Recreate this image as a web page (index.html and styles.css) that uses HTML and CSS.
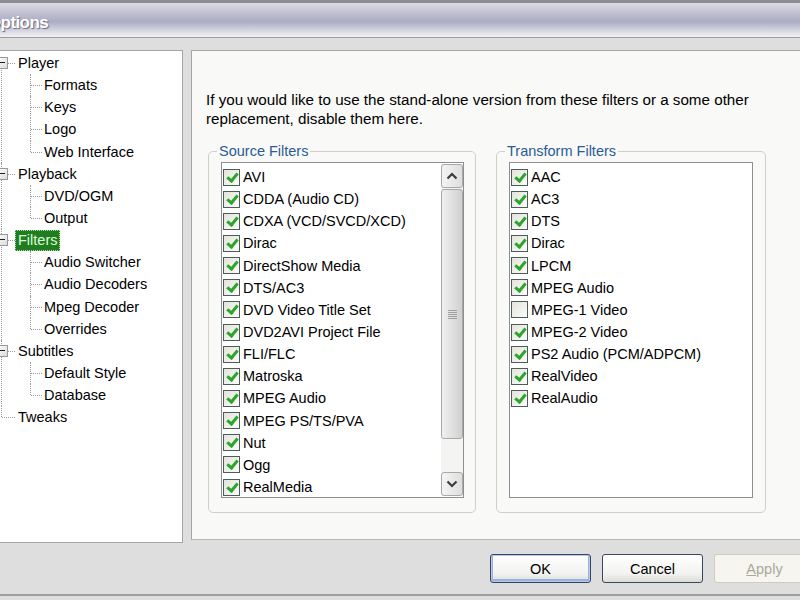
FILE: index.html
```html
<!DOCTYPE html>
<html>
<head>
<meta charset="utf-8">
<link rel="stylesheet" href="styles.css">
</head>
<body>
<div class="window">
  <div class="titlebar"><span class="title">Options</span></div>
  <div class="main">
    <div class="tree">
      <div class="grp first">
        <div class="row top"><span class="exp"></span><span class="lbl">Player</span></div>
        <div class="kids">
          <div class="row kid">Formats</div>
          <div class="row kid">Keys</div>
          <div class="row kid">Logo</div>
          <div class="row kid last">Web Interface</div>
        </div>
      </div>
      <div class="grp">
        <div class="row top"><span class="exp"></span><span class="lbl">Playback</span></div>
        <div class="kids">
          <div class="row kid">DVD/OGM</div>
          <div class="row kid last">Output</div>
        </div>
      </div>
      <div class="grp">
        <div class="row top"><span class="exp"></span><span class="lbl sel">Filters</span></div>
        <div class="kids">
          <div class="row kid">Audio Switcher</div>
          <div class="row kid">Audio Decoders</div>
          <div class="row kid">Mpeg Decoder</div>
          <div class="row kid last">Overrides</div>
        </div>
      </div>
      <div class="grp">
        <div class="row top"><span class="exp"></span><span class="lbl">Subtitles</span></div>
        <div class="kids">
          <div class="row kid">Default Style</div>
          <div class="row kid last">Database</div>
        </div>
      </div>
      <div class="grp lastgrp">
        <div class="row top leaf"><span class="lbl">Tweaks</span></div>
      </div>
    </div>

    <div class="panel">
      <p class="desc">If you would like to use the stand-alone version from these filters or a some other<br>replacement, disable them here.</p>
      <div class="groups">
        <fieldset class="group src">
          <legend>Source Filters</legend>
          <div class="listbox">
            <div class="items">
              <div class="item"><span class="cb on"></span>AVI</div>
              <div class="item"><span class="cb on"></span>CDDA (Audio CD)</div>
              <div class="item"><span class="cb on"></span>CDXA (VCD/SVCD/XCD)</div>
              <div class="item"><span class="cb on"></span>Dirac</div>
              <div class="item"><span class="cb on"></span>DirectShow Media</div>
              <div class="item"><span class="cb on"></span>DTS/AC3</div>
              <div class="item"><span class="cb on"></span>DVD Video Title Set</div>
              <div class="item"><span class="cb on"></span>DVD2AVI Project File</div>
              <div class="item"><span class="cb on"></span>FLI/FLC</div>
              <div class="item"><span class="cb on"></span>Matroska</div>
              <div class="item"><span class="cb on"></span>MPEG Audio</div>
              <div class="item"><span class="cb on"></span>MPEG PS/TS/PVA</div>
              <div class="item"><span class="cb on"></span>Nut</div>
              <div class="item"><span class="cb on"></span>Ogg</div>
              <div class="item"><span class="cb on"></span>RealMedia</div>
            </div>
            <div class="scrollbar">
              <div class="sbtn"><svg width="12" height="8" viewBox="0 0 12 8"><path d="M1.5 6.5 L6 2 L10.5 6.5" fill="none" stroke="#3b3b3b" stroke-width="2.2"/></svg></div>
              <div class="thumb"><span class="grip"></span></div>
              <div class="track"></div>
              <div class="sbtn"><svg width="12" height="8" viewBox="0 0 12 8"><path d="M1.5 1.5 L6 6 L10.5 1.5" fill="none" stroke="#3b3b3b" stroke-width="2.2"/></svg></div>
            </div>
          </div>
        </fieldset>
        <fieldset class="group trf">
          <legend>Transform Filters</legend>
          <div class="listbox">
            <div class="items">
              <div class="item"><span class="cb on"></span>AAC</div>
              <div class="item"><span class="cb on"></span>AC3</div>
              <div class="item"><span class="cb on"></span>DTS</div>
              <div class="item"><span class="cb on"></span>Dirac</div>
              <div class="item"><span class="cb on"></span>LPCM</div>
              <div class="item"><span class="cb on"></span>MPEG Audio</div>
              <div class="item"><span class="cb"></span>MPEG-1 Video</div>
              <div class="item"><span class="cb on"></span>MPEG-2 Video</div>
              <div class="item"><span class="cb on"></span>PS2 Audio (PCM/ADPCM)</div>
              <div class="item"><span class="cb on"></span>RealVideo</div>
              <div class="item"><span class="cb on"></span>RealAudio</div>
            </div>
          </div>
        </fieldset>
      </div>
    </div>
  </div>
  <div class="footer">
    <button class="btn default">OK</button>
    <button class="btn">Cancel</button>
    <button class="btn disabled"><u>A</u>pply</button>
  </div>
</div>
</body>
</html>
```
FILE: styles.css
```css
html, body {
  margin: 0;
  padding: 0;
  width: 800px;
  height: 600px;
  overflow: hidden;
  background: #dedede;
  font-family: "Liberation Sans", Arial, sans-serif;
  font-size: 14.5px;
  color: #000;
}

.window {
  display: flex;
  flex-direction: column;
  height: 600px;
}
.window > * { flex: none; }

.titlebar {
  height: 34px;
  border-top: 3px solid #8c8c92;
  border-bottom: 1px solid #9a9aa0;
  background: linear-gradient(to bottom, #dcdce4 0%, #c4c4d4 25%, #acacc4 55%, #d4d4e0 80%, #f2f2f4 100%);
  display: flex;
  align-items: center;
  padding-top: 0;
}

.title {
  margin-left: -12px;
  margin-top: 5px;
  color: #fff;
  font-weight: bold;
  font-size: 17px;
  font-family: "Liberation Sans", sans-serif;
  letter-spacing: -0.6px;
  text-shadow: 1px 1px 1px #6a6a80;
}

.main {
  display: flex;
  align-items: flex-start;
  gap: 8px;
  margin-top: 12px;
}

/* Tree */
.tree {
  width: 182px;
  height: 490px;
  background: #fff;
  border-top: 1px solid #a6a6a6;
  border-right: 1px solid #a6a6a6;
  border-bottom: 1px solid #a6a6a6;
  padding-top: 1px;
  box-sizing: content-box;
}

.grp {
  position: relative;
}
.grp::before {
  content: "";
  position: absolute;
  left: 1px;
  top: 0;
  bottom: 0;
  border-left: 1px dotted #9a9a9a;
}
.grp.first::before { top: 11px; }
.grp.lastgrp::before { bottom: auto; height: 11px; }

.row {
  height: 22.15px;
  line-height: 22.15px;
  white-space: nowrap;
  position: relative;
}

.row.top {
  padding-left: 15px;
}
.row.top::after {
  content: "";
  position: absolute;
  left: 2px;
  width: 13px;
  top: 11px;
  border-top: 1px dotted #9a9a9a;
}
.exp {
  position: absolute;
  left: -4px;
  top: 5px;
  width: 10px;
  height: 10px;
  border: 1px solid #8f9aa6;
  background: linear-gradient(135deg, #ffffff, #dcdcd4);
  z-index: 1;
}
.exp::after {
  content: "";
  position: absolute;
  left: 2px;
  right: 2px;
  top: 4px;
  height: 1px;
  background: #202020;
}
.lbl {
  display: inline-block;
  padding: 0 2px;
  line-height: 19px;
  border: 1px dotted transparent;
}
.lbl.sel {
  background: #1f7c1f;
  color: #dcffdc;
  border: 1px dotted #a8e0a8;
}

.row.kid {
  padding-left: 44px;
}
.row.kid::before {
  content: "";
  position: absolute;
  left: 30px;
  top: 0;
  bottom: 0;
  border-left: 1px dotted #9a9a9a;
}
.row.kid.last::before { bottom: auto; height: 11px; }
.row.kid::after {
  content: "";
  position: absolute;
  left: 31px;
  width: 11px;
  top: 11px;
  border-top: 1px dotted #9a9a9a;
}

/* Panel */
.panel {
  flex: 1;
  height: 488px;
  background: #f9f9f7;
  border-top: 1px solid #a6a6a6;
  border-left: 1px solid #a6a6a6;
  border-bottom: 1px solid #b8b8b8;
  padding-left: 14px;
}

.desc {
  margin: 40px 0 0 0;
  line-height: 18.5px;
  font-size: 15.2px;
}

.groups {
  display: flex;
  gap: 20px;
  margin-top: 15px;
  margin-left: 2px;
}

.group {
  margin: 0;
  padding: 2px 12px 13px 12px;
  border: 1px solid #d0d0c8;
  border-radius: 5px;
  box-sizing: border-box;
  height: 370px;
}
.group.src { width: 268px; padding-right: 11px; }
.group.trf { width: 270px; }

.group legend {
  color: #2a5c96;
  padding: 0 2px;
  margin-left: -4px;
  line-height: 17px;
}

.listbox {
  display: flex;
  height: 336px;
  box-sizing: border-box;
  border: 1px solid #8e8e8e;
  background: #fff;
}

.items {
  flex: 1;
  padding-top: 3px;
}

.item {
  height: 22.15px;
  display: flex;
  align-items: center;
  gap: 3px;
  padding-left: 1px;
  white-space: nowrap;
}

.cb {
  width: 15px;
  height: 15px;
  border: 1px solid #4c5c5e;
  background: linear-gradient(135deg, #e4e4dc, #fbfbf8);
  flex: none;
  position: relative;
}
.cb.on::after {
  content: "";
  position: absolute;
  left: 5px;
  top: 1px;
  width: 4px;
  height: 8px;
  border-right: 3px solid #2ba52b;
  border-bottom: 3px solid #2ba52b;
  transform: rotate(40deg);
}

/* Scrollbar */
.scrollbar {
  width: 22px;
  margin: 1px 0 1px 0;
  display: flex;
  flex-direction: column;
  background: #f4f4f2;
}
.sbtn {
  height: 22px;
  border: 1px solid #a8a8a8;
  border-radius: 3px;
  background: linear-gradient(to right, #f4f4f4, #dedede);
  display: flex;
  align-items: center;
  justify-content: center;
  box-sizing: content-box;
  flex: none;
}
.thumb {
  height: 248px;
  margin-top: 1px;
  border: 1px solid #a8a8a8;
  border-radius: 3px;
  background: linear-gradient(to right, #f0f0f0, #e0e0e0 50%, #d0d0d0);
  display: flex;
  align-items: center;
  justify-content: center;
  flex: none;
}
.grip {
  width: 9px;
  height: 9px;
  background: repeating-linear-gradient(to bottom, #a0a0a0 0 1px, transparent 1px 2px);
}
.track {
  flex: 1;
}

/* Footer */
.footer {
  height: 40px;
  display: flex;
  justify-content: flex-end;
  align-items: flex-start;
  gap: 11px;
  padding-top: 11px;
  border-bottom: 2px solid #9e9e9e;
  margin-right: -15px;
}

.btn {
  width: 101px;
  height: 29px;
  font-family: "Liberation Sans", Arial, sans-serif;
  font-size: 14.5px;
  color: #000;
  border: 1px solid #3a4660;
  border-radius: 3px;
  background: linear-gradient(to bottom, #ffffff 0%, #f2f2f0 70%, #dcdcd6 100%);
  padding: 0;
}
.btn.default {
  box-shadow: inset 0 0 0 1px #b6c8ec, inset 0 -1px 0 2px #9ab2e2;
}
.btn.disabled {
  color: #aaa79a;
  border-color: #cfcdc2;
  background: #f6f5f0;
}
```
